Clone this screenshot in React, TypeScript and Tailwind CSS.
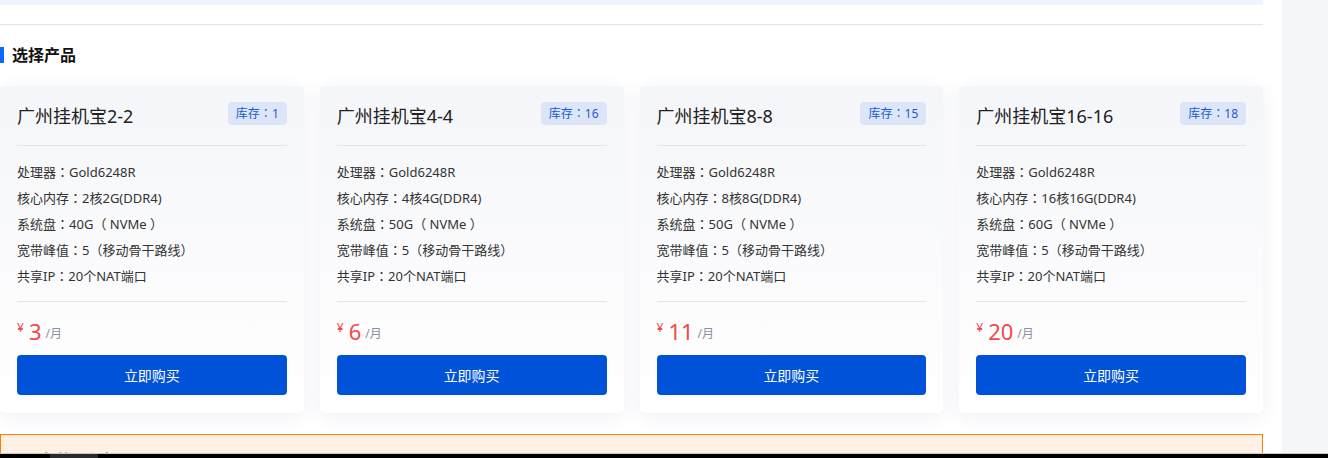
const products = [
  { name: '广州挂机宝2-2', stock: 1, core: '2核2G(DDR4)', disk: '40G', price: 3 },
  { name: '广州挂机宝4-4', stock: 16, core: '4核4G(DDR4)', disk: '50G', price: 6 },
  { name: '广州挂机宝8-8', stock: 15, core: '8核8G(DDR4)', disk: '50G', price: 11 },
  { name: '广州挂机宝16-16', stock: 18, core: '16核16G(DDR4)', disk: '60G', price: 20 },
]

const font = { fontFamily: '"Noto Sans", "Noto Sans CJK SC", sans-serif' }

// full-width punctuation centred the way the reference renders it
const P = ({ c }: { c: string }) => <span className="font-['Noto_Sans_CJK_TC']">{c}</span>

const ProductCard = ({ p }: { p: (typeof products)[number] }) => (
  <div className="rounded-[5px] bg-gradient-to-b from-[#f5f6f9] to-white px-[17px] pt-4 pb-[18px] shadow-[0_4px_18px_rgba(40,70,150,0.08)]">
    <div className="flex items-start justify-between border-b border-[#e3e5e9] pb-[14px]">
      <div className="text-[18px] leading-[29px] text-[#222]">{p.name}</div>
      <span className="rounded-[4px] bg-[#dde6f8] px-2 text-[12px] leading-[22px] text-[#1859d6]">库存<P c="：" />{p.stock}</span>
    </div>
    <div className="mt-[13px] border-b border-[#e3e5e9] pb-3 text-[13px] leading-[26px] text-[#333]">
      <div>处理器<P c="：" />Gold6248R</div>
      <div>核心内存<P c="：" />{p.core}</div>
      <div>系统盘<P c="：" />{p.disk}<P c="（" /> NVMe <P c="）" /></div>
      <div>宽带峰值<P c="：" />5<P c="（" />移动骨干路线<P c="）" /></div>
      <div>共享IP<P c="：" />20个NAT端口</div>
    </div>
    <div className="flex h-[53px] items-center pt-[4px]">
      <span className="mr-[5px] -mt-[6px] text-[12px] text-[#f5484a]">¥</span>
      <span className="text-[22px] leading-none text-[#f5484a]">{p.price}</span>
      <span className="ml-[4px] mt-[6px] text-[12px] text-[#8c919b]">/月</span>
    </div>
    <button type="button" className="h-10 w-full rounded-[4px] bg-[#0052d9] text-[14px] text-white">立即购买</button>
  </div>
)

export default function App() {
  return (
    <div className="flex min-h-screen bg-[#f5f6fa]" style={font}>
      <div className="w-[1282px] bg-white pr-[19px]">
        <div className="h-[5px] bg-[#eef5fe]" />
        <div className="h-[20px] border-b border-[#e3e5e9]" />
        <div className="mt-[19px] flex items-center gap-[8px]">
          <span className="h-[16px] w-[4px] bg-[#0a6cff]" />
          <h3 className="text-[16px] font-bold leading-[22px] text-[#111]">选择产品</h3>
        </div>
        <div className="mt-[20px] grid grid-cols-4 gap-4">
          {products.map((p) => (
            <ProductCard key={p.name} p={p} />
          ))}
        </div>
        <div className="mt-[21px] border border-[#ff8000] bg-[#fef0e3] px-[23px] py-[14px]">
          <div className="text-[16px] font-bold leading-[22px] text-[#ff7a00]">服务使用须知</div>
          <div className="mt-2 text-[13px] leading-[24px] text-[#555]">请遵守相关法律法规使用服务。</div>
        </div>
      </div>
      <div className="fixed inset-x-0 bottom-0 h-[5px] border-t border-[#c8c8c8] bg-black">
        <div className="ml-[50px] h-full w-[48px] bg-[#2a2a2a]" />
      </div>
    </div>
  )
}
